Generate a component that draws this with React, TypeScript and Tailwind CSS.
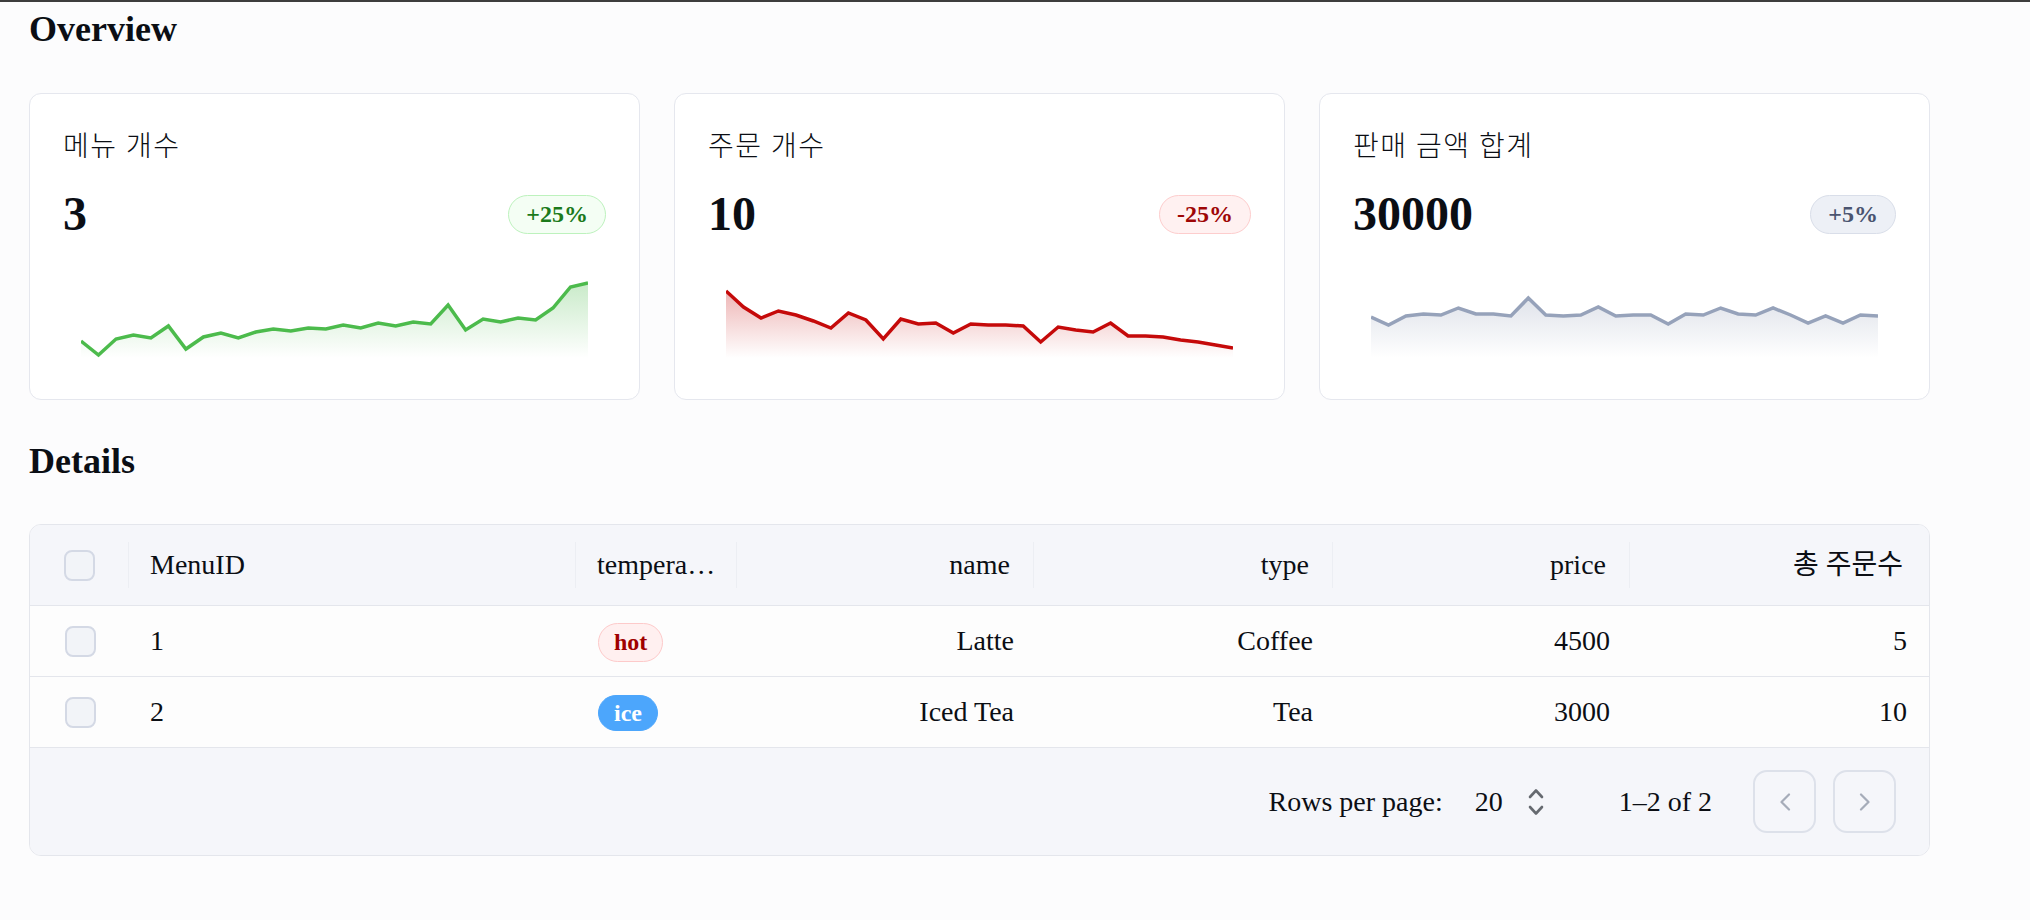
import React from 'react';
import clsx from 'clsx';

type Trend = 'up' | 'down' | 'neutral';

interface StatCardProps {
    title: string;
    value: string;
    change: string;
    trend: Trend;
    data: number[];
}

// y values are read off the reference in page pixels, chart box starts at y=270
const menuData = [
    341, 355, 339, 335, 338, 326, 349, 337, 333, 338, 332, 329, 331, 328, 329,
    325, 328, 323, 326, 322, 324, 305, 330, 319, 322, 318, 320, 308, 287, 283,
];
const orderData = [
    291, 307, 318, 311, 315, 321, 328, 313, 320, 339, 319, 324, 323, 333, 324,
    325, 325, 326, 342, 327, 330, 332, 323, 336, 336, 337, 340, 342, 345, 348,
];
const salesData = [
    317, 325, 316, 314, 315, 308, 314, 314, 316, 298, 315, 316, 315, 307, 316,
    315, 315, 324, 314, 315, 308, 314, 315, 308, 315, 323, 316, 323, 315, 316,
];

const stats: StatCardProps[] = [
    { title: '메뉴 개수', value: '3', change: '+25%', trend: 'up', data: menuData },
    { title: '주문 개수', value: '10', change: '-25%', trend: 'down', data: orderData },
    { title: '판매 금액 합계', value: '30000', change: '+5%', trend: 'neutral', data: salesData },
];

const lineColor: Record<Trend, string> = {
    up: '#4cbb4c',
    down: '#c50a0a',
    neutral: '#96a2ba',
};

const Sparkline: React.FC<{ data: number[]; trend: Trend }> = ({ data, trend }) => {
    const w = 507;
    const h = 88;
    const step = w / (data.length - 1);
    const line = data
        .map((y, i) => `${i === 0 ? 'M' : 'L'}${(i * step).toFixed(1)},${y - 270}`)
        .join(' ');
    const area = `${line} L${w},${h} L0,${h} Z`;
    const gid = `spark-${trend}`;
    const color = lineColor[trend];

    return (
        <svg width="100%" height={h} viewBox={`0 0 ${w} ${h}`} preserveAspectRatio="none">
            <defs>
                <linearGradient id={gid} x1="0" y1="0" x2="0" y2="1">
                    <stop offset="0%" stopColor={color} stopOpacity={0.3} />
                    <stop offset="100%" stopColor={color} stopOpacity={0} />
                </linearGradient>
            </defs>
            <path d={area} fill={`url(#${gid})`} />
            <path
                d={line}
                fill="none"
                stroke={color}
                strokeWidth={3.5}
                vectorEffect="non-scaling-stroke"
            />
        </svg>
    );
};

const StatCard: React.FC<StatCardProps> = ({ title, value, change, trend, data }) => (
    <div className="flex flex-col rounded-[12px] border border-[#e5e7ee] bg-white px-[33px] pt-[32px] pb-[41px]">
        <div className="text-[28px] font-light leading-[42px] tracking-[1.5px]">{title}</div>
        <div className="mt-[17px] flex h-[58px] items-center justify-between">
            <span className="text-[48px] font-bold leading-[58px]">{value}</span>
            <span
                className={clsx(
                    'inline-flex h-[39px] items-center rounded-full border px-[17px] text-[24px] font-bold',
                    trend === 'up' && 'border-[#bdf2bd] bg-[#f4fef4] text-[#1b7a1b]',
                    trend === 'down' && 'border-[#fdcdcd] bg-[#fff1f1] text-[#9e0606]',
                    trend === 'neutral' && 'border-[#d9dee9] bg-[#edf0f6] text-[#4a5470]'
                )}
            >
                {change}
            </span>
        </div>
        <div className="mx-[18px] mt-[27px] h-[88px]">
            <Sparkline data={data} trend={trend} />
        </div>
    </div>
);

const Checkbox: React.FC = () => (
    <span className="block h-[31px] w-[31px] rounded-[8px] border-2 border-[#d4d9e5] bg-[#f2f4f8]" />
);

const Separator: React.FC = () => <span className="h-[46px] w-px shrink-0 bg-[#eceef3]" />;

interface Column {
    label: string;
    align: 'left' | 'right';
}

const columns: Column[] = [
    { label: 'MenuID', align: 'left' },
    { label: 'temperature', align: 'left' },
    { label: 'name', align: 'right' },
    { label: 'type', align: 'right' },
    { label: 'price', align: 'right' },
    { label: '총 주문수', align: 'right' },
];

const rows = [
    { id: '1', temp: 'hot', name: 'Latte', type: 'Coffee', price: '4500', orders: '5' },
    { id: '2', temp: 'ice', name: 'Iced Tea', type: 'Tea', price: '3000', orders: '10' },
];

const gridCols = 'grid grid-cols-[99px_447px_161px_297px_299px_297px_1fr]';

const App: React.FC = () => {
    return (
        <div className="min-h-screen bg-[#fcfcfd] font-['Liberation_Serif','Noto_Sans_CJK_KR',serif] text-[#0b0e14]">
            <div className="h-[2px] bg-[#3d3d3d]" />
            <div className="ml-[29px] w-[1901px]">
                <h2 className="mt-[6px] text-[36px] font-bold leading-[43px]">Overview</h2>

                <div className="mt-[42px] grid grid-cols-3 gap-[34px]">
                    {stats.map((s) => (
                        <StatCard key={s.title} {...s} />
                    ))}
                </div>

                <h2 className="mt-[40px] text-[36px] font-bold leading-[43px]">Details</h2>

                <div className="mt-[41px] overflow-hidden rounded-[12px] border border-[#e4e6ec] text-[28px]">
                    {/* Header */}
                    <div className={clsx(gridCols, 'h-[81px] border-b border-[#e4e6ec] bg-[#f5f6fa]')}>
                        <div className="flex items-center">
                            <div className="flex flex-1 justify-center">
                                <Checkbox />
                            </div>
                            <Separator />
                        </div>
                        {columns.map((col, i) => (
                            <div key={col.label} className="flex min-w-0 items-center">
                                <div
                                    className={clsx(
                                        'min-w-0 flex-1 truncate whitespace-nowrap pl-[21px]',
                                        col.align === 'right' ? 'text-right' : 'pr-[19px]',
                                        col.align === 'right' && i < columns.length - 1 && 'pr-[23px]',
                                        i === columns.length - 1 && 'pr-[26px]'
                                    )}
                                >
                                    {col.label}
                                </div>
                                {i < columns.length - 1 && <Separator />}
                            </div>
                        ))}
                    </div>

                    {/* Rows */}
                    {rows.map((r) => (
                        <div
                            key={r.id}
                            className={clsx(gridCols, 'h-[71px] items-center border-b border-[#e4e6ec] bg-[#fdfdfd]')}
                        >
                            <div className="flex justify-center pl-[2px]">
                                <Checkbox />
                            </div>
                            <div className="pl-[21px]">{r.id}</div>
                            <div className="pl-[22px]">
                                {r.temp === 'hot' ? (
                                    <span className="inline-flex h-[39px] items-center rounded-full border border-[#fdcaca] bg-[#fff0f0] px-[15px] text-[24px] font-bold text-[#a00000]">
                                        hot
                                    </span>
                                ) : (
                                    <span className="inline-flex h-[36px] items-center rounded-full border border-[#4ca6fc] bg-[#4ca6fc] px-[15px] text-[24px] font-bold text-white">
                                        ice
                                    </span>
                                )}
                            </div>
                            <div className="pr-[20px] text-right">{r.name}</div>
                            <div className="pr-[20px] text-right">{r.type}</div>
                            <div className="pr-[20px] text-right">{r.price}</div>
                            <div className="pr-[22px] text-right">{r.orders}</div>
                        </div>
                    ))}

                    {/* Pagination footer */}
                    <div className="flex h-[107px] items-center justify-end bg-[#f5f6fa] pr-[33px] leading-none">
                        <span>Rows per page:</span>
                        <span className="ml-[32px]">20</span>
                        <svg className="ml-[25px]" width="16" height="30" viewBox="0 0 16 30" fill="none">
                            <path
                                d="M2 10 L8 3.5 L14 10 M2 20 L8 26.5 L14 20"
                                stroke="#666a70"
                                strokeWidth="2.6"
                                strokeLinecap="round"
                                strokeLinejoin="round"
                            />
                        </svg>
                        <span className="ml-[75px]">1–2 of 2</span>
                        <button className="ml-[41px] flex h-[63px] w-[63px] items-center justify-center rounded-[14px] border-2 border-[#dde1ea]">
                            <svg width="12" height="18" viewBox="0 0 12 18" fill="none">
                                <path d="M10 1.5 L2.5 9 L10 16.5" stroke="#a6acb9" strokeWidth="2.2" strokeLinecap="round" strokeLinejoin="round" />
                            </svg>
                        </button>
                        <button className="ml-[17px] flex h-[63px] w-[63px] items-center justify-center rounded-[14px] border-2 border-[#dde1ea]">
                            <svg width="12" height="18" viewBox="0 0 12 18" fill="none">
                                <path d="M2 1.5 L9.5 9 L2 16.5" stroke="#a6acb9" strokeWidth="2.2" strokeLinecap="round" strokeLinejoin="round" />
                            </svg>
                        </button>
                    </div>
                </div>
            </div>
        </div>
    );
};

export default App;
